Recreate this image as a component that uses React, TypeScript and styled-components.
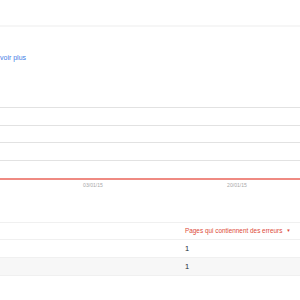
import React from 'react';
import styled, { createGlobalStyle } from 'styled-components';

const GlobalStyle = createGlobalStyle`
  html, body {
    margin: 0;
    padding: 0;
    background: #fff;
    font-family: 'Liberation Sans', Arial, sans-serif;
  }
`;

const Page = styled.div`
  width: 300px;
  height: 300px;
  overflow: hidden;
  display: flex;
  flex-direction: column;
`;

const TopBar = styled.div`
  height: 25px;
  border-bottom: 2px solid #f6f6f6;
`;

const LinkRow = styled.div`
  padding-top: 24px;
  height: 8px;
  line-height: 8px;
`;

const MoreLink = styled.a`
  font-size: 7px;
  color: #3f7ce6;
  text-decoration: none;
`;

const Chart = styled.div`
  position: relative;
  margin-top: 48px;
`;

const GridLine = styled.div`
  height: 17.7px;
  border-top: 1px solid #e2e2e2;
  box-sizing: border-box;
`;

const Baseline = styled.div`
  height: 2px;
  background: #ef8a82;
`;

const Axis = styled.div`
  position: relative;
  height: 12px;
`;

const Tick = styled.span<{ $at: number }>`
  position: absolute;
  top: 2px;
  left: ${(p) => p.$at}px;
  transform: translateX(-50%);
  font-size: 5.1px;
  color: #a8a8a8;
  white-space: nowrap;
`;

const Table = styled.div`
  margin-top: 30px;
  border-top: 1px solid #f0f0f0;
`;

const Row = styled.div<{ $shaded?: boolean; $head?: boolean }>`
  display: grid;
  grid-template-columns: 185px 1fr;
  height: ${(p) => (p.$head ? 17 : 18)}px;
  align-items: center;
  box-sizing: border-box;
  border-bottom: 1px solid #f0f0f0;
  background: ${(p) => (p.$shaded ? '#f7f7f7' : '#fff')};
`;

const HeaderCell = styled.div`
  font-size: 6.4px;
  color: #dd4b39;
  white-space: nowrap;
  display: flex;
  align-items: center;
  gap: 4px;
`;

const SortArrow = styled.span`
  font-size: 4.5px;
`;

const Cell = styled.div`
  font-size: 7.5px;
  color: #222833;
`;

const rows = ['1', '1'];

const App: React.FC = () => (
  <Page>
    <GlobalStyle />
    <TopBar />
    <LinkRow>
      <MoreLink href="#">voir plus</MoreLink>
    </LinkRow>
    <Chart>
      <GridLine />
      <GridLine />
      <GridLine />
      <GridLine />
      <Baseline />
      <Axis>
        <Tick $at={93}>03/01/15</Tick>
        <Tick $at={237}>20/01/15</Tick>
      </Axis>
    </Chart>
    <Table>
      <Row $head>
        <div />
        <HeaderCell>
          Pages qui contiennent des erreurs <SortArrow>▼</SortArrow>
        </HeaderCell>
      </Row>
      {rows.map((v, i) => (
        <Row key={i} $shaded={i % 2 === 1}>
          <div />
          <Cell>{v}</Cell>
        </Row>
      ))}
    </Table>
  </Page>
);

export default App;
